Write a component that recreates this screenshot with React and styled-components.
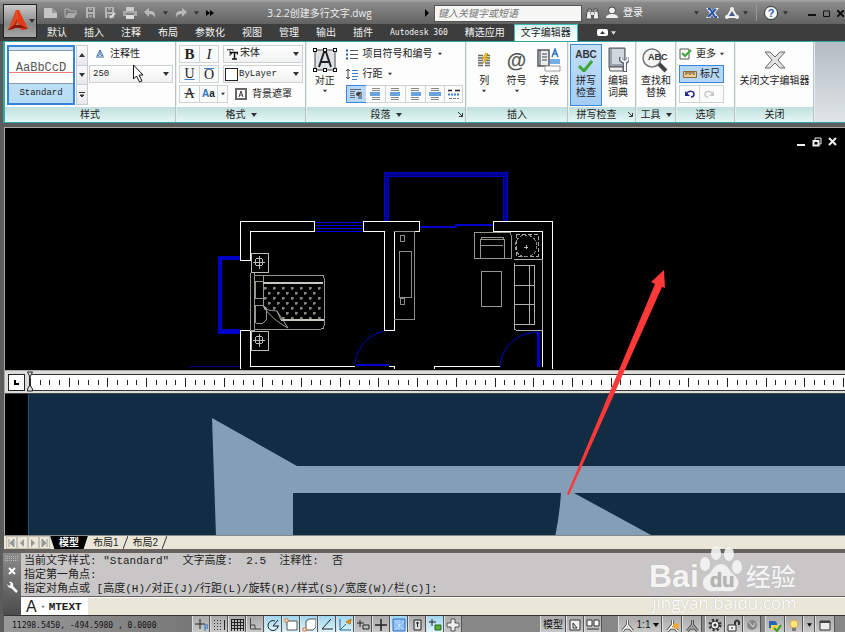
import React from "react";
import styled, { createGlobalStyle, css } from "styled-components";

const UI = '"Liberation Sans", "Noto Sans CJK SC", sans-serif';
const MONO = '"DejaVu Sans Mono", "Noto Sans CJK SC", monospace';
const TYPE = '"Liberation Mono", "Noto Sans CJK SC", monospace';
const SERIF = '"Liberation Serif", serif';

const GlobalStyle = createGlobalStyle`
  *, *::before, *::after { box-sizing: border-box; }
  body { margin: 0; background: #5c5c5c; }
  button, input, select { font: inherit; color: inherit; margin: 0; padding: 0; border: 0; background: none; border-radius: 0; }
  svg { display: block; flex: none; }
`;

const Page = styled.div`
  position: relative;
  display: flex;
  flex-direction: column;
  height: 100vh;
  overflow: hidden;
  font: 10px/14px ${UI};
  color: #222;
  white-space: nowrap;
`;

/* ---------- header ---------- */
const Header = styled.header`
  flex: none;
  display: grid;
  grid-template-columns: 38px 1fr;
  grid-template-rows: 24px 17px;
  background: linear-gradient(#a6a6a6 0, #8a8a8a 3px, #626262 24px, #3d3d3d 24px);
`;
const LogoButton = styled.button`
  grid-row: 1 / 3;
  align-self: start;
  display: flex;
  align-items: center;
  gap: 1px;
  width: 34px;
  height: 34px;
  margin: 4px 0 0 3px;
  padding-left: 3px;
  border: 1px solid #222;
  background: linear-gradient(#c9c9c9, #888 60%, #a5a5a5);
`;
const TitleBar = styled.div`
  display: flex;
  align-items: center;
  padding: 2px 1px 0 6px;
  min-width: 0;
`;
const Tools = styled.div`
  display: flex;
  align-items: center;
  gap: ${(p) => p.$gap}px;
`;
const PlainButton = styled.button`
  display: flex;
  align-items: center;
  justify-content: center;
  gap: ${(p) => p.$gap || 3}px;
`;
const FileName = styled.h1`
  flex: 1;
  margin: 0;
  text-align: center;
  font: 10px/14px "Open Sans", "Noto Sans CJK SC", sans-serif;
  color: #eee;
`;
const Search = styled.input`
  width: 148px;
  height: 17px;
  margin: 0 4px 0 5px;
  padding-left: 3px;
  background: #f6f6f4;
  border: 1px solid #555;
  font-size: 10px;
  &::placeholder { color: #777; opacity: 1; font-style: italic; }
`;
const Login = styled.button`
  display: flex;
  align-items: center;
  gap: 5px;
  width: 93px;
  margin: 0 7px;
  color: #f4f4f4;
  & > :last-child { margin-left: auto; }
`;
const Divider = styled.span`
  width: 1px;
  height: 16px;
  margin: 0 7px 0 8px;
  background: #999;
`;
const TabBar = styled.nav`
  display: flex;
  gap: 1px;
  padding-left: 1px;
  color: #f2f2f2;
`;
const Tab = styled.button`
  padding: 0 8px;
  line-height: 16px;
  font-family: ${MONO};
  font-size: ${(p) => (p.$latin ? 8 : 10)}px;
  ${(p) => p.$active && css`
    color: #222;
    background: linear-gradient(#d8f3f2, #fff);
    border: 1px solid #3dbab8;
    border-bottom: 0;
    padding: 0 6px;
  `}
`;
const TabExtra = styled(PlainButton)`
  margin-left: 18px;
`;

/* ---------- ribbon ---------- */
const Ribbon = styled.div`
  flex: none;
  display: flex;
  gap: 2px;
  margin-left: 3px;
  border: solid #2fa9a5;
  border-width: 1px 0 1px 2px;
  background: linear-gradient(#b4bcc3, #dfe5e8);
`;
const Panel = styled.section`
  display: flex;
  flex-direction: column;
  width: ${(p) => p.$w}px;
  background: #fdfdfd;
  box-shadow: 1px 0 #b9c2c4, 2px 0 #e8eeee;
`;
const PanelBody = styled.div`
  display: flex;
  height: 65px;
  padding: 3px 2px 0 2px;
  gap: ${(p) => p.$gap || 0}px;
  justify-content: ${(p) => p.$justify || "flex-start"};
`;
const PanelTitle = styled.h2`
  display: flex;
  align-items: center;
  justify-content: center;
  gap: 5px;
  position: relative;
  margin: 0;
  height: 15px;
  font: 10px/14px ${UI};
  background: linear-gradient(#bfdedd, #e4f8f7);
`;
const Launcher = styled.button`
  position: absolute;
  right: 2px;
  top: 5px;
`;
const Column = styled.div`
  display: flex;
  flex-direction: column;
  gap: ${(p) => p.$gap || 2}px;
  min-width: 0;
  ${(p) => p.$grow && "flex: 1;"}
`;
const Line = styled.div`
  display: flex;
  align-items: center;
  gap: ${(p) => p.$gap || 0}px;
  height: 18px;
`;
const StyleCard = styled.button`
  width: 68px;
  height: 60px;
  border: 2px solid #3583dc;
  padding-top: 3px;
  display: flex;
  flex-direction: column;
  background: linear-gradient(#cfe6f6, #b4dbf4);
`;
const Sample = styled.span`
  width: 100%;
  height: 34px;
  background: linear-gradient(#fff 21px, #f27a7a 21px, #f27a7a 22px, #fff 22px);
  border: solid #8a9aa8;
  border-width: 1px 0;
  font: 12px/34px ${TYPE};
  color: #555;
`;
const StyleName = styled.span`
  width: 100%;
  font: 9px/18px ${TYPE};
`;
const Steps = styled.div`
  display: grid;
  grid-template-rows: 1fr 1fr 1fr;
  width: 12px;
  height: 60px;
  margin: 0 1px;
  background: #c9ccd0;
  gap: 1px;
  border: 1px solid #c9ccd0;
`;
const Step = styled.button`
  display: flex;
  align-items: center;
  justify-content: center;
  background: linear-gradient(#fafafa, #e6e8ea);
`;
const Combo = styled.label`
  display: flex;
  align-items: center;
  flex: 1;
  min-width: 0;
  height: 18px;
  padding: 0 3px 0 ${(p) => p.$pad || 3}px;
  gap: ${(p) => p.$gap || 2}px;
  border: 1px solid #cdd0d3;
  background: linear-gradient(#fff, #f0f1f2);
  select, input { flex: 1; min-width: 0; width: 10px; appearance: none; outline: 0; font-family: ${TYPE}; font-size: ${(p) => p.$size || 9}px; }
`;
const Swatch = styled.span`
  width: 13px;
  height: 13px;
  border: 1px solid #222;
  background: #fff;
`;
const Group = styled.div`
  display: flex;
  border: 1px solid #d0d3d6;
  background: #fafbfb;
  height: 18px;
`;
const GlyphButton = styled.button`
  display: flex;
  align-items: center;
  justify-content: center;
  width: ${(p) => p.$w || 19}px;
  font: ${(p) => (p.$italic ? "italic " : "")}${(p) => (p.$bold ? "bold " : "")}${(p) => p.$size || 14}px/16px ${(p) => (p.$sans ? UI : SERIF)};
  color: #222;
  text-decoration: ${(p) => p.$line || "none"};
  text-decoration-color: ${(p) => p.$tint || "#333"};
  & + & { border-left: 1px solid #d0d3d6; }
  ${(p) => p.$on && css`
    background: #b5d7f7;
    box-shadow: 0 0 0 1px #3b86d8;
  `}
  b { color: #2d72bd; }
`;
const BarLetter = styled.span`
  border-top: 1px solid #3a7fd0;
  font: 14px/12px ${SERIF};
`;
const BigButton = styled.button`
  display: flex;
  flex-direction: column;
  align-items: center;
  width: ${(p) => p.$w}px;
  height: 60px;
  line-height: 12px;
  ${(p) => p.$on && css`
    background: linear-gradient(#c4dff8, #a4cdf5);
    box-shadow: 0 0 0 1px #3b86d8;
  `}
`;
const Picture = styled.span`
  display: flex;
  align-items: center;
  justify-content: center;
  height: ${(p) => p.$h || 30}px;
`;
const Toggle = styled(PlainButton)`
  width: 45px;
  height: 18px;
  background: #b5d7f7;
  border: 1px solid #3b86d8;
`;

/* ---------- workspace ---------- */
const Workspace = styled.main`
  position: relative;
  flex: 1;
  display: flex;
  flex-direction: column;
  min-height: 0;
  margin: 4px 0 0 4px;
  border: solid #aaa6a2;
  border-width: 1px 0 0 1px;
  background: #000;
`;
const Fill = styled.svg`
  width: 100%;
  height: ${(p) => p.$h}px;
`;
const EditorArea = styled.div`
  flex: 1;
  display: flex;
  min-height: 0;
  overflow: hidden;
  margin-left: 23px;
  background: #122c44;
  border-left: 1px solid #2a5078;
`;
const RulerBar = styled.div`
  flex: none;
  display: flex;
  gap: 4px;
  height: 24px;
  padding: 3px 0 0 3px;
  background: #dcdcd8;
  border-bottom: 1px solid #444;
  border-top: 1px solid #aaa;
`;
const TabStop = styled.button`
  display: flex;
  align-items: center;
  justify-content: center;
  width: 17px;
  height: 17px;
  border: 1px solid #222;
  background: #fff;
`;
const Scale = styled.div`
  flex: 1;
  height: 17px;
  overflow: hidden;
  border: 1px solid #333;
  border-right: 0;
  background: #fff;
`;
const WindowButtons = styled.div`
  position: absolute;
  top: 9px;
  right: 7px;
  display: flex;
  gap: 6px;
`;
const Overlay = styled.svg`
  position: absolute;
  left: ${(p) => p.$x}px;
  top: ${(p) => p.$y}px;
  pointer-events: none;
`;

/* ---------- bottom ---------- */
const LayoutTabs = styled.nav`
  flex: none;
  display: flex;
  align-items: center;
  height: 14px;
  margin-left: 4px;
  padding-left: 2px;
  background: #ebe7d8;
  border-top: 1px solid #888;
  overflow: hidden;
`;
const NavButton = styled(PlainButton)`
  width: 11px;
  height: 13px;
  border: 1px solid #c6c3b6;
`;
const LayoutTab = styled.button`
  height: 14px;
  line-height: 13px;
  padding: 0 4px 0 5px;
  ${(p) => p.$active && css`
    color: #fff;
    background: #000;
    padding: 0 9px;
    font-weight: bold;
    clip-path: polygon(0 0, 100% 0, 88% 100%, 12% 100%);
  `}
`;
const CommandPanel = styled.section`
  flex: none;
  position: relative;
  display: flex;
  height: 66px;
  margin-left: 3px;
  padding-top: 4px;
  background: #666260;
`;
const Grip = styled.div`
  display: flex;
  flex-direction: column;
  align-items: center;
  gap: 6px;
  width: 18px;
  padding-top: 3px;
  background: linear-gradient(#8c8c8c, #4c4c4c);
`;
const History = styled.div`
  flex: 1;
  height: 43px;
  padding: 1px 3px;
  background: #c8c6c6;
  font: 11px/14px ${TYPE};
  white-space: pre;
`;
const Prompt = styled.label`
  display: flex;
  align-items: center;
  height: 18px;
  background: #ebe7d8;
  border-top: 1px solid #fff;
`;
const PromptInner = styled.span`
  display: flex;
  align-items: center;
  gap: 4px;
  width: 67px;
  height: 100%;
  padding-left: 5px;
  background: #fff;
  font: 16px/16px ${UI};
  input { width: 38px; font: bold 11px/14px ${TYPE}; outline: 0; }
`;
const Watermark = styled.aside`
  position: absolute;
  right: 45px;
  bottom: 3px;
  width: 151px;
  color: #f4f4f4;
  text-shadow: 0 0 1px #aaa;
  pointer-events: none;
`;
const Brand = styled.div`
  display: flex;
  align-items: flex-end;
  margin-bottom: 2px;
  font: bold 32px/32px ${UI};
`;
const BrandCn = styled.span`
  margin-left: 3px;
  font: 500 25px/34px "Noto Sans CJK SC", sans-serif;
`;
const Site = styled.div`
  color: #fff;
  font: 17px/18px "Open Sans", sans-serif;
  text-align: center;
`;
const StatusBar = styled.footer`
  flex: none;
  display: flex;
  height: 17px;
  margin-left: 4px;
  overflow: hidden;
  background: #888;
  border-top: 1px solid #333;
`;
const Coordinates = styled.output`
  width: 188px;
  padding: 4px 0 0 8px;
  font: 8px/12px ${MONO};
  color: #111;
  background: linear-gradient(90deg, #999, #777);
`;
const StatusGroup = styled.div`
  display: flex;
  height: 20px;
  ${(p) => p.$end && "margin-left: auto;"}
`;
const StatusButton = styled.button`
  display: flex;
  align-items: center;
  justify-content: center;
  gap: 3px;
  width: ${(p) => p.$w || 18}px;
  height: 18px;
  border-right: 1px solid #555;
  border-left: 1px solid #ddd;
  color: #111;
  background: ${(p) => (p.$on ? "linear-gradient(#9fd6ee, #e6f8ff)" : "linear-gradient(#aaa, #ccc)")};
`;
const Gap = styled.span`
  width: ${(p) => p.$w}px;
`;

/* ---------- icons ---------- */
const Caret = ({ c = "#333", s = 5 }) => (
  <svg width={s} height="4" viewBox="0 0 6 4"><path d="M0 0h6L3 4z" fill={c} /></svg>
);
const Svg = ({ w = 14, h = 14, children, vb }) => (
  <svg width={w} height={h} viewBox={vb || `0 0 ${w} ${h}`} fill="none">{children}</svg>
);

const Logo = () => (
  <Svg w={21} h={24}>
    <path d="M9 1L1 21l6-1 4-9z" fill="#b51d08" />
    <path d="M9 1h3l9 19-7 1-4-9z" fill="#e43b16" />
    <path d="M9 1l2 7-4 8-6 5z" fill="#f26a3a" opacity=".6" />
    <path d="M1 21l6-5h7l7 4-7-1H7z" fill="#8d1606" />
  </Svg>
);
const NewIcon = () => <Svg w={13} h={12}><path d="M0 1h8l5 5v5H0z" fill="#c5c5c5" /><path d="M8 1v5h5" fill="#999" /></Svg>;
const OpenIcon = () => <Svg w={14} h={12}><path d="M1 10V2h4l1 2h6v2" stroke="#b4b4b4" /><path d="M1 11l3-5h9l-3 5z" fill="#aaa" /></Svg>;
const SaveIcon = ({ pen }) => (
  <Svg w={12} h={12}><path d="M1 0h9v11H1z" fill="#b4b4b4" /><path d="M3 1h5v4H3zM3 7h5v4H3z" fill="#777" /><path d="M4 2h3M4 9h3" stroke="#ccc" />{pen && <path d="M6 11l5-5" stroke="#ddd" strokeWidth="2" />}</Svg>
);
const PrintIcon = () => <Svg w={14} h={12}><path d="M3 0h8v4H3z" fill="#ccc" /><path d="M0 4h14v5H0z" fill="#aaa" /><path d="M3 8h8v4H3z" fill="#ddd" /><path d="M3 7h8" stroke="#555" /></Svg>;
const TurnIcon = ({ flip, c = "#b9b9b9", w = 12 }) => (
  <Svg w={w} h={10} vb="0 0 12 10"><path transform={flip ? "translate(12 0) scale(-1 1)" : undefined} d="M0 4l5-4v3c4-.5 7 1 6 7-1-3-2.500-4-6-4v3z" fill={c} /></Svg>
);
const SmallTurn = ({ flip, c }) => (
  <Svg w={12} h={10}><g transform={flip ? "translate(12 0) scale(-1 1)" : undefined}><path d="M2 5c3-4 8-3 8 0 0 2-1 3-3 3" stroke={c} strokeWidth="1.500" /><path d="M1 2v5h5z" fill={c} /></g></Svg>
);
const Binoculars = () => (
  <Svg w={13} h={13}><path d="M2 2h3v4l1 6H0l1-7zM8 2h3l1 3 1 7H7l1-6z" fill="#eee" stroke="#444" /><path d="M5 5h3v3H5z" fill="#ddd" /><path d="M2 4h2M9 4h2" stroke="#333" /></Svg>
);
const UserIcon = () => <Svg w={12} h={14}><circle cx="6" cy="4.500" r="3.500" fill="#eee" stroke="#444" /><path d="M0 12c0-3 3-4 6-4s6 1 6 4z" fill="#eee" /></Svg>;
const Exchange = () => <Svg w={13} h={12}><path d="M0 1h5l2 3 2-3h4L9 6l4 5H8L6 8l-2 3H0l4-5z" fill="#e8eef8" /><path d="M2 2h2l5 8h2M10 2L2 10" stroke="#2a57a6" strokeWidth="2" /></Svg>;
const Network = () => <Svg w={14} h={13}><path d="M7 2L2 10h10z" stroke="#eee" strokeWidth="2" /><path d="M7 5l-2 4h4z" fill="#2a57a6" /><circle cx="7" cy="2" r="2" fill="#eee" /><circle cx="2" cy="10" r="2" fill="#eee" /><circle cx="12" cy="10" r="2" fill="#eee" /></Svg>;
const HelpMark = styled.span`
  width: 14px;
  height: 14px;
  border-radius: 7px;
  background: #fff;
  border: 1px solid #333;
  color: #2b58ad;
  font: bold 11px/12px ${UI};
  text-align: center;
`;

const AnnoIcon = () => <Svg w={10} h={10}><path d="M5 1L2 7l3-1.500L8 7z" stroke="#3b6ea8" /><path d="M1 8l8 0M5 1v4" stroke="#3b6ea8" /></Svg>;
const FontIcon = () => <Svg w={11} h={12}><path d="M0 1.500h6M3 1v7M0 1v2M6 1v2" stroke="#555" /><path d="M3 4.500h8M7.500 4v7M5 11h5M4 4v2.500M10.500 4v2.500" stroke="#111" strokeWidth="1.500" /></Svg>;
const MaskIcon = () => <Svg w={12} h={12}><path d="M1 1h10v10H1z" stroke="#666" strokeWidth="2" /><path d="M4 9l2-6 2 6M4.500 7h3" stroke="#444" /></Svg>;
const JustifyIcon = () => (
  <Svg w={26} h={24}>
    <path d="M3 2h20v20H3z" fill="#dfe2e5" stroke="#444" />
    <path d="M7 19l5-15h2l5 15M9 14h8" stroke="#222" strokeWidth="2" />
    {[3, 13, 23].flatMap((x) => [2, 22].map((y) => <rect key={`${x}-${y}`} x={x - 1.5} y={y - 1.5} width="3" height="3" fill="#fff" stroke="#111" />))}
  </Svg>
);
const BulletIcon = () => <Svg w={12} h={11}><path d="M0 1.500h2M0 5.500h2M0 9.500h2" stroke="#225a9b" strokeWidth="2" /><path d="M4 1.500h8M4 5.500h8M4 9.500h8" stroke="#555" /></Svg>;
const SpacingIcon = () => <Svg w={12} h={12}><path d="M2 1v10M0 3l2-2 2 2M0 9l2 2 2-2" stroke="#444" /><path d="M6 2.500h6M6 5.500h6M6 8.500h6M6 11.500h5" stroke="#3b7fc8" /></Svg>;
const AlignIcon = ({ l = 1, r = 13 }) => (
  <Svg w={14} h={12}><path d="M3 .5h8M3 2.500h8M3 9.500h8M3 11.500h8" stroke="#888" /><path d={`M${l} 5h${r - l}M${l} 7h${r - l}`} stroke="#3a86d8" strokeWidth="1.500" /></Svg>
);
const ParaIcon = () => <Svg w={14} h={12}><path d="M1 1.500h11M1 3.500h5M1 5.500h4M1 7.500h5M1 9.500h5" stroke="#666" /><path d="M12 4v7M10 4v7M12 4.500H9a1.500 1.500 0 000 3h1" stroke="#444" fill="#444" /></Svg>;
const SpreadIcon = () => <Svg w={14} h={12}><path d="M1 2.500h4M8 2.500h5" stroke="#222" strokeWidth="1.500" /><path d="M1 6.500h12" stroke="#3a86d8" strokeDasharray="2 1" strokeWidth="2" /><path d="M2 10.500h10" stroke="#777" strokeDasharray="3 1" /></Svg>;
const ColumnsIcon = () => <Svg w={13} h={14}><path d="M0 2.500h5M0 5h5M0 7.500h5M0 10h5M0 12.500h5M7 2.500h5M7 5h5M7 7.500h5M7 10h5M7 12.500h5" stroke="#666" strokeWidth="1.500" /><path d="M8 0L4 6h3l-3 5 7-6H8l2-5z" fill="#f5c518" stroke="#a67c00" strokeWidth=".5" /></Svg>;
const AtMark = styled.span`
  font: bold 20px/24px ${UI};
  color: #555;
`;
const FieldIcon = () => (
  <Svg w={24} h={24}>
    <path d="M1 2h11v16H1z" fill="#e8edf2" stroke="#555" strokeWidth="1.500" /><path d="M3 2v16M5 6h5M5 9h5M5 12h5" stroke="#444" />
    <path d="M15 9l3-8 3 8M16 6h4" stroke="#2f74c0" strokeWidth="1.500" /><path d="M13 11h10v5H13z" fill="#72b0ec" /><path d="M8 18h15v5H8z" fill="#fff" stroke="#999" />
  </Svg>
);
const SpellMark = styled.span`
  display: flex;
  flex-direction: column;
  align-items: center;
  font: bold 10px/11px ${UI};
  color: #333;
`;
const CheckIcon = () => <Svg w={15} h={12}><path d="M1 6l5 5L14 1" stroke="#3fa535" strokeWidth="3" /></Svg>;
const DictIcon = () => (
  <Svg w={22} h={26}>
    <path d="M2 1h16v19H2z" fill="#9aa3b0" stroke="#555" /><path d="M2 20h14v4H3z" fill="#eee" stroke="#555" /><path d="M5 2h12v15H5z" fill="#d0d6de" />
    <path d="M14 10v3l4 3 3-3v-3M18 15v10" stroke="#5b6470" strokeWidth="4" /><path d="M14.500 10v3l3.500 2 2.500-2v-3M18 15v9" stroke="#f2f4f6" strokeWidth="2" />
  </Svg>
);
const FindIcon = () => (
  <Svg w={28} h={26}>
    <circle cx="10" cy="11" r="9" fill="#f4f6f8" stroke="#777" strokeWidth="1.500" /><path d="M17 17l7 7" stroke="#444" strokeWidth="4" />
    <text x="6" y="13" fontFamily="Liberation Sans" fontWeight="bold" fontSize="9" fill="#333">ABC</text>
  </Svg>
);
const MoreIcon = () => <Svg w={13} h={12}><path d="M1 1h9v10H1z" stroke="#555" fill="#fff" /><path d="M3 5l3 3 6-6" stroke="#3fa535" strokeWidth="2" /></Svg>;
const RulerIcon = () => <Svg w={14} h={7}><path d="M.5.5h13v6H.5z" fill="#e8cf9a" stroke="#8a6a3a" /><path d="M3 1v3M5 1v2M7 1v3M9 1v2M11 1v3" stroke="#6a4a1a" /></Svg>;
const CloseBig = () => <Svg w={22} h={18}><path d="M1 1h5l5 5 5-5h5l-7 8 7 8h-5l-5-5-5 5H1l7-8z" fill="#e3e3e3" stroke="#666" /></Svg>;
const LaunchIcon = () => <Svg w={5} h={5}><path d="M0 0l4 4M4.500 1v3.500H1" stroke="#333" /></Svg>;

/* ---------- drawing ---------- */
const crosses = [];
for (let r = 0; r < 7; r++)
  for (let c = 0; c < 7; c++) {
    const x = 265 + c * 9 + (r % 2 ? 4 : 0);
    const y = 288 + r * 5;
    if (x < 323 && !(r > 4 && x < 280)) crosses.push(`M${x - 1} ${y}h3M${x} ${y - 1}v3`);
  }

const FloorPlan = () => (
  <Fill $h={242}>
    <g transform="translate(-5 -128)" fill="none" stroke="#bdbdb6" shapeRendering="crispEdges">
      <g stroke="#0000c8">
        <path d="M386 221v-47h119v47" strokeWidth="5" stroke="#000090" />
        <path d="M384 221v-49h123v49M388 221v-45h115v45" />
        <path d="M314 222h49M314 225h49M314 228h49M314 231h49" stroke="#0000e0" />
        <path d="M240 258h-20v73h20" strokeWidth="4" /><path d="M240 256h-22v77h22" />
        <path d="M420 227h36M456 225h37M456 227v-3" strokeWidth="2" />
        <path d="M190 368v-2h50" stroke="#000090" /><path d="M356 365h33" strokeWidth="2" />
        <path d="M355 364c2-18 14-31 34-34M500 367c1-18 14-34 38-35" shapeRendering="auto" />
        <path d="M538 332v35" strokeWidth="3" />
      </g>
      <g stroke="#fff">
        <path d="M314 221h-74v39h10v-29h64zM240 369v-39h10v36h105M363 221h56v10h-25v99h-10M363 221v10h21v99M493 231v-10h59v148M493 231h49v136M434 369v-3h66M389 366h5v3" />
      </g>
      <path d="M251 253h17v19h-17zM251 331h17v19h-17z" />
      <path d="M253 262h12M259 256v13M253 340h12M259 334v13" /><circle cx="259" cy="262" r="4" /><circle cx="259" cy="340" r="4" />
      <path d="M250 273v57h4v-57M254 275h67q3 0 3 3v48q0 3-3 3h-67zM263 275v31" stroke="#96968f" />
      <path d="M256 281h7v17h-8v-14zM256 305h7l3 4v11l-3 3h-7l-1-3v-13z" stroke="#96968f" />
      <path d="M263 283h60M281 320h43" strokeWidth="2" stroke="#c9c9c0" />
      <path d="M263 306c5 8 14 16 25 22l-11-17c-5-1-9 1-14-5M277 311l4 9" stroke="#a0a098" shapeRendering="auto" />
      <path d={crosses.join("")} stroke="#b4b4ac" shapeRendering="auto" />
      <path d="M394 231h20v88h-20M399 251h12v46h-12zM400 235h4v6h-4zM400 298h4v6h-4z" stroke="#8c8c88" />
      <path d="M474 235q0-3 3-3h31q3 0 3 3v23h-37zM480 258v-19h24v19M481 245h22M481 239q0-2 3-2h17q3 0 3 2" stroke="#96968f" />
      <path d="M481 271h20v35h-20z" stroke="#96968f" />
      <path d="M514 259h28v71h-26q-2 0-2-3v-64M515 265h19v59h-19M529 265v59M515 285h19M515 304h19" stroke="#b0b0a8" />
      <path d="M516 234h22v22h-22z" stroke="#aaa" strokeDasharray="4 2" /><circle cx="526" cy="246" r="11" stroke="#888" strokeDasharray="3 2" /><path d="M524 247h4M526 245v4" />
    </g>
  </Fill>
);

const RulerTicks = () => (
  <Fill $h={15}>
    {Array.from({ length: 220 }, (_, i) => {
      const x = Math.round(i * 9.68) + 0.5;
      return <path key={i} d={i % 4 ? `M${x} 5v5` : `M${x} 3v9`} stroke="#222" />;
    })}
  </Fill>
);

const Solid = () => (
  <Fill $h={900}>
    <g transform="translate(-29 -394)" fill="#849eb8">
      <path d="M212 418l85 48h3600v27H293v873h-49z" />
      <path d="M561 493h13l77 42 100 55H540q18-50 21-97z" />
    </g>
  </Fill>
);

const tabs = ["默认", "插入", "注释", "布局", "参数化", "视图", "管理", "输出", "插件", "Autodesk 360", "精选应用", "文字编辑器"];

const statusIcons = [
  ["捕捉推断", 0, <path d="M6 1v10M1 6h10" stroke="#222" />, <path d="M11 13V7h3v3h-3" stroke="#27c" />],
  ["捕捉", 0, <path d="M2 2.500h9M2 5.500h9M2 8.500h9M2 11.500h9" stroke="#333" strokeDasharray="1 2" />, <path d="M12.500 2v10" stroke="#222" />],
  ["栅格", 0, <path d="M1 1.500h12M1 4.500h12M1 7.500h12M1 10.500h12M1.500 1v12M4.500 1v12M7.500 1v12M10.500 1v12M13.500 1v12" stroke="#222" />],
  ["正交", 0, <path d="M2.500 0v11H13M3 7h4v4" stroke="#444" />],
  ["极轴", 1, <path d="M12 8A5 5 0 119 3M7 8l5-6M7 8h6" stroke="#222" />],
  ["对象捕捉", 1, <path d="M3 3h10v9H3z" fill="#fff" stroke="#555" />, <path d="M1 1h3v3H1z" fill="#fff" stroke="#e07030" />],
  ["三维捕捉", 1, <path d="M4 3l3-2h7v8l-3 3H4z" fill="#fff" stroke="#555" />, <path d="M1 10h3v3H1z" fill="#fff" stroke="#e07030" />],
  ["追踪", 1, <path d="M11 1L2 11h11" stroke="#222" />],
  ["动态 UCS", 1, <path d="M2 1v11h11M2 12l6-6" stroke="#25659c" />, <path d="M8 4l5-3-1 5z" fill="#f0a020" stroke="#c07010" />],
  ["动态输入", 0, <path d="M4 2v7M1 5h7M7 7h6v4H7z" stroke="#222" />],
  ["线宽", 0, <path d="M7 1v12M1 7h12" stroke="#222" strokeWidth="1.500" />],
  ["透明度", 1, <path d="M1 1h12v12H1z" fill="#8fc0f5" stroke="#2b6bc0" />, <path d="M3 3l9 9M12 3l-9 9M7 2v10" stroke="#e9f4ff" strokeDasharray="1 1" />],
  ["快捷特性", 0, <path d="M4 2h7v10H4z" fill="#ddd" stroke="#222" />, <path d="M6 5h3M7.500 4v5" stroke="#222" />],
  ["选择循环", 1, <path d="M4 1v7M1 4h7" stroke="#222" />, <path d="M7 7h6v5H7z" fill="#5aaa3a" stroke="#2a6a1a" />],
  ["注释监视器", 0, <path d="M5 1h4v4h4v4H9v4H5V9H1V5h4z" fill="#eee" stroke="#555" />],
];

const Person = ({ c = "#fff", spark }) => (
  <Svg w={13} h={13}>
    <path d="M6.500 1v5l-5 6M6.500 6l5 6M4 9h5" stroke="#333" strokeWidth="3" /><path d="M6.500 1v5l-5 6M6.500 6l5 6M4 9h5" stroke={c} strokeWidth="1.500" />
    {spark && <circle cx="10" cy="7" r="3" fill="#f5a836" />}
  </Svg>
);

export default function App() {
  return (
    <Page>
      <GlobalStyle />
      <Header>
        <LogoButton aria-label="应用程序菜单"><Logo /><Caret s={6} /></LogoButton>
        <TitleBar>
          <Tools $gap={7}>
            <PlainButton aria-label="新建"><NewIcon /></PlainButton>
            <PlainButton aria-label="打开"><OpenIcon /></PlainButton>
            <PlainButton aria-label="保存"><SaveIcon /></PlainButton>
            <PlainButton aria-label="另存为"><SaveIcon pen /></PlainButton>
            <PlainButton aria-label="打印"><PrintIcon /></PlainButton>
            <PlainButton aria-label="放弃" $gap={7}><TurnIcon /><Caret /></PlainButton>
            <PlainButton aria-label="重做" $gap={7}><TurnIcon flip /><Caret /></PlainButton>
            <PlainButton aria-label="展开"><Svg w={8} h={6}><path d="M0 0l4 3-4 3zM4 0l4 3-4 3z" fill="#000" /></Svg></PlainButton>
          </Tools>
          <FileName>3.2.2创建多行文字.dwg</FileName>
          <PlainButton aria-label="搜索"><Svg w={4} h={8}><path d="M0 0l4 4-4 4z" fill="#000" /></Svg></PlainButton>
          <Search aria-label="搜索帮助" placeholder="键入关键字或短语" />
          <PlainButton aria-label="查找"><Binoculars /></PlainButton>
          <Login><UserIcon />登录<Caret /></Login>
          <Tools $gap={6}>
            <PlainButton aria-label="Exchange"><Exchange /></PlainButton>
            <PlainButton aria-label="连接" $gap={4}><Network /><Caret /></PlainButton>
          </Tools>
          <Divider />
          <PlainButton aria-label="帮助" $gap={5}><HelpMark>?</HelpMark><Caret /></PlainButton>
          <Gap $w={20} />
          <Tools $gap={7}>
            <PlainButton aria-label="最小化"><Svg w={8} h={8}><path d="M0 6h8" stroke="#111" strokeWidth="2" /></Svg></PlainButton>
            <PlainButton aria-label="最大化"><Svg w={7} h={7}><path d="M.5 1h6v5.500h-6z" stroke="#111" /></Svg></PlainButton>
            <PlainButton aria-label="关闭"><Svg w={7} h={7}><path d="M0 0l7 7M7 0L0 7" stroke="#111" strokeWidth="2" /></Svg></PlainButton>
          </Tools>
        </TitleBar>
        <TabBar>
          {tabs.map((t) => <Tab key={t} $latin={t.startsWith("A")} $active={t === "文字编辑器"}>{t}</Tab>)}
          <TabExtra aria-label="最小化功能区"><Svg w={11} h={7}><rect width="11" height="7" rx="2" fill="#fff" /><path d="M3 5l2.500-3L8 5z" fill="#333" /></Svg><Caret c="#ddd" /></TabExtra>
        </TabBar>
      </Header>

      <Ribbon>
        <Panel $w={170}>
          <PanelBody>
            <StyleCard><Sample>AaBbCcD</Sample><StyleName>Standard</StyleName></StyleCard>
            <Steps>
              <Step aria-label="上一个"><Svg w={6} h={4}><path d="M0 4h6L3 0z" fill="#333" /></Svg></Step>
              <Step aria-label="下一个"><Caret s={6} /></Step>
              <Step aria-label="更多样式"><Svg w={6} h={6}><path d="M0 .5h6M1 3h4L3 5z" fill="#333" stroke="#333" /></Svg></Step>
            </Steps>
            <Column $grow>
              <Line><PlainButton $gap={5}><Gap $w={1} /><AnnoIcon />注释性</PlainButton></Line>
              <Line><Combo><input aria-label="文字高度" defaultValue="250" /><Caret s={6} /></Combo></Line>
            </Column>
          </PanelBody>
          <PanelTitle>样式</PanelTitle>
        </Panel>

        <Panel $w={128}>
          <PanelBody>
            <Column $grow>
              <Line $gap={4}>
                <Group><GlyphButton $bold $size={15}>B</GlyphButton><GlyphButton $italic $size={15}>I</GlyphButton></Group>
                <Combo $size={10}><FontIcon /><select aria-label="字体" defaultValue="宋体"><option>宋体</option></select><Caret s={6} /></Combo>
              </Line>
              <Line $gap={4}>
                <Group><GlyphButton $line="underline" $tint="#3a7fd0">U</GlyphButton><GlyphButton><BarLetter>O</BarLetter></GlyphButton></Group>
                <Combo $pad={1} $gap={1}><Swatch /><select aria-label="颜色" defaultValue="ByLayer"><option>ByLayer</option></select><Caret s={6} /></Combo>
              </Line>
              <Line $gap={7}>
                <Group>
                  <GlyphButton $line="line-through">A</GlyphButton>
                  <GlyphButton $sans $size={10} $bold $w={18}><b>A</b>a</GlyphButton>
                  <GlyphButton aria-label="大小写" $w={10}><Caret s={4} /></GlyphButton>
                </Group>
                <PlainButton $gap={5}><MaskIcon />背景遮罩</PlainButton>
              </Line>
            </Column>
          </PanelBody>
          <PanelTitle>格式 <Caret s={6} /></PanelTitle>
        </Panel>

        <Panel $w={158}>
          <PanelBody $gap={5}>
            <BigButton $w={32}><Picture><JustifyIcon /></Picture>对正<Picture $h={8}><Caret s={4} /></Picture></BigButton>
            <Column>
              <Line><PlainButton $gap={5}><BulletIcon />项目符号和编号 <Caret s={4} /></PlainButton></Line>
              <Line><PlainButton $gap={5}><SpacingIcon />行距 <Caret s={4} /></PlainButton></Line>
              <Group>
                <GlyphButton aria-label="默认" $on><ParaIcon /></GlyphButton>
                <GlyphButton aria-label="左对齐" $w={20}><AlignIcon r={11} /></GlyphButton>
                <GlyphButton aria-label="居中" $w={20}><AlignIcon l={2} r={12} /></GlyphButton>
                <GlyphButton aria-label="右对齐" $w={20}><AlignIcon l={3} /></GlyphButton>
                <GlyphButton aria-label="两端对齐" $w={20}><AlignIcon /></GlyphButton>
                <GlyphButton aria-label="分散" $w={18}><SpreadIcon /></GlyphButton>
              </Group>
            </Column>
          </PanelBody>
          <PanelTitle>段落 <Caret s={6} /><Launcher aria-label="段落设置"><LaunchIcon /></Launcher></PanelTitle>
        </Panel>

        <Panel $w={100}>
          <PanelBody>
            <BigButton $w={31}><Picture><ColumnsIcon /></Picture>列<Picture $h={8}><Caret s={4} /></Picture></BigButton>
            <BigButton $w={34}><Picture><AtMark>@</AtMark></Picture>符号<Picture $h={8}><Caret s={4} /></Picture></BigButton>
            <BigButton $w={32}><Picture><FieldIcon /></Picture>字段</BigButton>
          </PanelBody>
          <PanelTitle>插入</PanelTitle>
        </Panel>

        <Panel $w={66}>
          <PanelBody $gap={2}>
            <BigButton $w={30} $on><Picture><SpellMark>ABC<CheckIcon /></SpellMark></Picture>拼写<br />检查</BigButton>
            <BigButton $w={30}><Picture><DictIcon /></Picture>编辑<br />词典</BigButton>
          </PanelBody>
          <PanelTitle>拼写检查<Gap $w={6} /><Launcher aria-label="拼写检查设置"><LaunchIcon /></Launcher></PanelTitle>
        </Panel>

        <Panel $w={38}>
          <PanelBody $justify="center">
            <BigButton $w={34}><Picture><FindIcon /></Picture>查找和<br />替换</BigButton>
          </PanelBody>
          <PanelTitle>工具 <Caret s={6} /></PanelTitle>
        </Panel>

        <Panel $w={57}>
          <PanelBody>
            <Column>
              <Line><PlainButton $gap={4}><MoreIcon />更多 <Caret s={4} /></PlainButton></Line>
              <Line><Toggle aria-pressed="true"><RulerIcon />标尺</Toggle></Line>
              <Group>
                <GlyphButton aria-label="放弃"><SmallTurn c="#24248c" /></GlyphButton>
                <GlyphButton aria-label="重做"><SmallTurn flip c="#c8c8c8" /></GlyphButton>
              </Group>
            </Column>
          </PanelBody>
          <PanelTitle>选项</PanelTitle>
        </Panel>

        <Panel $w={77}>
          <PanelBody $justify="center">
            <BigButton $w={74}><Picture><CloseBig /></Picture>关闭文字编辑器</BigButton>
          </PanelBody>
          <PanelTitle>关闭</PanelTitle>
        </Panel>
      </Ribbon>

      <Workspace>
        <FloorPlan />
        <WindowButtons>
          <PlainButton aria-label="最小化视口"><Svg w={10} h={10}><path d="M1 8h8" stroke="#eee" strokeWidth="2" /></Svg></PlainButton>
          <PlainButton aria-label="还原视口"><Svg w={10} h={10}><path d="M3 3V1h6v6H7" stroke="#eee" /><path d="M1.500 4h5v4.500h-5z" stroke="#eee" strokeWidth="2" /></Svg></PlainButton>
          <PlainButton aria-label="关闭视口"><Svg w={10} h={10}><path d="M1 1l7 7M8 1L1 8" stroke="#eee" strokeWidth="2" /></Svg></PlainButton>
        </WindowButtons>
        <RulerBar>
          <TabStop aria-label="制表位"><Svg w={5} h={5}><path d="M1 0v4h4" stroke="#000" strokeWidth="2" /></Svg></TabStop>
          <Scale><RulerTicks /></Scale>
        </RulerBar>
        <EditorArea><Solid /></EditorArea>
        <Overlay $x={21} $y={243} width="9" height="22" fill="none"><path d="M1.500 1h5L4 6zM4 6v9M1.500 20h5v-2L4 14l-2.500 4z" fill="#ddd" stroke="#222" /></Overlay>
        <Overlay $x={555} $y={136} width="110" height="234">
          <path d="M104 6L91 18l4 2L7 230l2 1L102 23l3 1z" fill="#ff3838" />
        </Overlay>
      </Workspace>

      <LayoutTabs>
        <NavButton aria-label="第一个"><Svg w={7} h={8}><path d="M1 0v8M6 0L2 4l4 4z" fill="#999" stroke="#999" /></Svg></NavButton>
        <NavButton aria-label="上一个"><Svg w={5} h={8}><path d="M4 0L0 4l4 4z" fill="#999" /></Svg></NavButton>
        <NavButton aria-label="下一个"><Svg w={5} h={8}><path d="M0 0l4 4-4 4z" fill="#999" /></Svg></NavButton>
        <NavButton aria-label="最后一个"><Svg w={7} h={8}><path d="M6 0v8M1 0l4 4-4 4z" fill="#999" stroke="#999" /></Svg></NavButton>
        <LayoutTab $active>模型</LayoutTab>
        <LayoutTab>布局1</LayoutTab>
        <Svg w={5} h={14}><path d="M0 13L5 0" stroke="#333" /></Svg>
        <LayoutTab>布局2</LayoutTab>
        <Svg w={5} h={14}><path d="M0 13L5 0" stroke="#333" /></Svg>
      </LayoutTabs>

      <CommandPanel>
        <Grip>
          <Svg w={14} h={5}><path d="M0 .5h14M0 2.500h14M0 4.500h14" stroke="#bbb" strokeDasharray="1 1" /></Svg>
          <PlainButton aria-label="关闭命令行"><Svg w={8} h={8}><path d="M1 1l6 6M7 1L1 7" stroke="#fff" strokeWidth="2" /></Svg></PlainButton>
          <PlainButton aria-label="自定义"><Svg w={12} h={12}><path d="M5 5l6 6" stroke="#fff" strokeWidth="2.500" /><path d="M1 3l2 2 2-2-2-2c2-1 5 1 4 4-1 3-5 3-6-2z" fill="#fff" /></Svg></PlainButton>
        </Grip>
        <Column $grow $gap={1}>
          <History>{'当前文字样式: "Standard"  文字高度:  2.5  注释性:  否\n指定第一角点:\n指定对角点或 [高度(H)/对正(J)/行距(L)/旋转(R)/样式(S)/宽度(W)/栏(C)]:'}</History>
          <Prompt><PromptInner>A<Caret s={4} c="#888" /><input aria-label="命令" defaultValue="MTEXT" /></PromptInner></Prompt>
        </Column>
        <Watermark>
          <Brand>
            Bai
            <Svg w={44} h={46}>
              <g fill="#f4f4f4" fillOpacity=".9">
                <ellipse cx="6" cy="18" rx="5" ry="7" /><ellipse cx="17" cy="7" rx="5" ry="7" /><ellipse cx="30" cy="8" rx="5" ry="7" /><ellipse cx="38" cy="21" rx="5" ry="7" />
                <path d="M22 18c6 0 8 6 12 10 5 4 7 8 4 13-3 6-10 4-16 4s-13 2-17-4c-3-5 0-10 5-13 4-4 6-10 12-10z" />
              </g>
              <text x="11" y="41" fontFamily="Liberation Sans" fontWeight="bold" fontSize="20" fill="#b5b3b3">du</text>
            </Svg>
            <BrandCn>经验</BrandCn>
          </Brand>
          <Site>jingyan.baidu.com</Site>
        </Watermark>
      </CommandPanel>

      <StatusBar>
        <Coordinates>11298.5450, -494.5980 , 0.0000</Coordinates>
        <StatusGroup>
          {statusIcons.map(([name, on, a, b]) => (
            <StatusButton key={name} aria-label={name} $on={on}><Svg w={14} h={14}>{a}{b}</Svg></StatusButton>
          ))}
        </StatusGroup>
        <StatusGroup $end>
          <StatusButton $w={26}>模型</StatusButton>
          <StatusButton aria-label="布局"><Svg w={12} h={12}><path d="M1 1h10v10H1z" fill="#eee" stroke="#333" /><path d="M4 4v5h4z" stroke="#333" /></Svg></StatusButton>
          <StatusButton aria-label="快速查看"><Svg w={14} h={12}><path d="M1 1h5v6H1zM8 1h5v6H8z" fill="#fff" stroke="#333" /><path d="M1 10h12" stroke="#333" /></Svg></StatusButton>
          <Gap $w={16} />
          <StatusButton $w={44} aria-label="注释比例 1:1"><Person />1:1<Caret s={6} c="#000" /></StatusButton>
          <StatusButton $w={20} aria-label="注释可见性"><Person spark /></StatusButton>
          <StatusButton $w={20} aria-label="自动缩放"><Person c="#aaa" /></StatusButton>
          <Gap $w={3} />
          <StatusButton $w={20} aria-label="工作空间"><Svg w={14} h={14}><circle cx="7" cy="7" r="5" stroke="#333" strokeWidth="3" strokeDasharray="2 2" /><circle cx="7" cy="7" r="4" fill="#eee" stroke="#333" /><circle cx="7" cy="7" r="1.500" fill="#333" /></Svg></StatusButton>
          <StatusButton aria-label="锁定"><Svg w={14} h={13}><path d="M1 6h8v6H1z" fill="#eee" stroke="#333" /><path d="M8 6V3q2-3 4 0v3" stroke="#333" strokeWidth="2" /><path d="M5 8v2" stroke="#222" /></Svg></StatusButton>
          <StatusButton aria-label="硬件加速"><Svg w={12} h={12}><circle cx="6" cy="6" r="5" fill="#888" /><path d="M3 3l4 5 2-4" stroke="#ddd" /></Svg></StatusButton>
          <Gap $w={4} />
          <StatusButton $w={20} aria-label="隔离对象"><Svg w={14} h={13}><path d="M1 2h6l2 2v5H1z" fill="#2b62b8" /><path d="M3 6h7v5H3z" fill="#f3d64a" /><path d="M6 9l3 3 4-6" stroke="#3a9c2c" strokeWidth="2" /></Svg></StatusButton>
          <StatusButton aria-label="提示"><Svg w={10} h={13}><circle cx="5" cy="5" r="4" fill="#ffe48a" stroke="#d9a93a" /><path d="M3 9h4v3H3z" fill="#777" /></Svg></StatusButton>
          <StatusButton $w={12} aria-label="状态栏菜单"><Caret s={5} c="#000" /></StatusButton>
          <StatusButton $w={20} aria-label="全屏显示"><Svg w={12} h={11}><path d="M1 1h10v9H1z" fill="#eee" stroke="#333" /><path d="M1 2h10" stroke="#444" strokeWidth="2" /></Svg></StatusButton>
          <Gap $w={10} />
        </StatusGroup>
      </StatusBar>

      <Overlay $x={132} $y={64} width="12" height="19"><path d="M1.500 1v14l3-3 3 6 2.500-1-3-6h4z" fill="#fff" stroke="#111" /></Overlay>
    </Page>
  );
}
